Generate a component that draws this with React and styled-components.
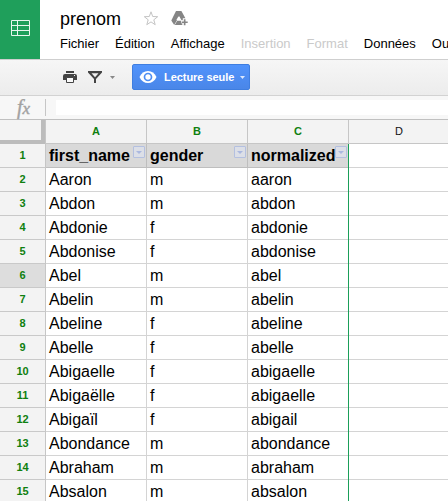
import React from "react";
import styled, { createGlobalStyle } from "styled-components";

const Global = createGlobalStyle`
  * { box-sizing: border-box; }
  body { margin: 0; background: #fff; overflow: hidden; font-family: "Liberation Sans", Arial, sans-serif; }
  svg { display: block; }
`;

const Page = styled.div`
  width: 100vw;
  height: 100vh;
  overflow: hidden;
  display: flex;
  flex-direction: column;
`;

const Header = styled.header`
  display: flex;
  flex: none;
  height: 60px;
  border-bottom: 1px solid #cfcfcf;
`;

const Logo = styled.div`
  width: 40px;
  height: 59px;
  flex: none;
  background: #1f9f5b;
  padding: 20px 0 0 11px;
`;

const HeaderBody = styled.div`
  flex: 1;
  min-width: 0;
  padding-left: 20px;
`;

const TitleRow = styled.div`
  display: flex;
  height: 34px;
  padding-top: 9px;
`;

const Title = styled.div`
  width: 83px;
  font-size: 18px;
  line-height: 20px;
`;

const TitleIcon = styled.div`
  width: 28px;
  padding-top: 1px;
`;

const Menu = styled.nav`
  display: flex;
  gap: 16px;
  height: 20px;
  font-size: 13px;
  line-height: 20px;
  white-space: nowrap;
`;

const MenuItem = styled.span`
  flex: none;
  color: ${(p) => (p.$disabled ? "#cacaca" : "#000")};
`;

const Toolbar = styled.div`
  display: flex;
  flex: none;
  height: 36px;
  padding: 4px 0 0 62px;
  background: linear-gradient(#f6f6f6, #ececec);
  border-bottom: 1px solid #d2d2d2;
`;

const Tool = styled.div`
  width: ${(p) => p.$w}px;
  height: 26px;
  flex: none;
`;

const ModeButton = styled.button`
  display: flex;
  align-items: center;
  width: 118px;
  height: 26px;
  padding: 0 0 0 6px;
  border: 1px solid #3f7ee0;
  border-radius: 2px;
  background: linear-gradient(#5093fc, #4a86e8);
  color: #fff;
  font: bold 11px/24px "Liberation Sans", Arial, sans-serif;
  white-space: nowrap;
`;

const ModeLabel = styled.span`
  width: 76px;
  margin-left: 7px;
  letter-spacing: -0.05px;
  text-align: left;
`;

const FormulaBar = styled.div`
  display: flex;
  flex: none;
  height: 24px;
  background: #f7f7f7;
  border-bottom: 1px solid #c0c0c0;
`;

const Fx = styled.div`
  width: 46px;
  height: 17px;
  margin-top: 3px;
  padding-left: 17px;
  border-right: 1px solid #c6c6c6;
  color: #a2a2a2;
  font: italic 20px/16px "Liberation Serif", serif;
  -webkit-text-stroke: 0.4px #a2a2a2;
`;

const FxSub = styled.span`
  font-size: 17px;
`;

const FormulaInput = styled.div`
  flex: 1;
  height: 15px;
  margin: 4px 0 0 10px;
  background: #fff;
`;

const Grid = styled.div`
  display: grid;
  flex: none;
  width: 450px;
  grid-template-columns: 46px 101px 101px 101px 101px;
  grid-auto-rows: 24px;
`;

const Corner = styled.div`
  background: #f3f3f3;
  box-shadow: inset -1px 0 #c6c6c6, inset -5px -4px #bcbcbc;
`;

const ColumnHead = styled.div`
  background: #f3f3f3;
  border-right: 1px solid #c6c6c6;
  border-bottom: 1px solid #c6c6c6;
  text-align: center;
  font-size: 11px;
  font-weight: ${(p) => (p.$filtered ? "bold" : "normal")};
  line-height: 23px;
  color: ${(p) => (p.$filtered ? "#0f800f" : "#111")};
`;

const RowHead = styled.div`
  background: ${(p) => (p.$active ? "#dddddd" : "#f3f3f3")};
  border-right: 1px solid #c6c6c6;
  border-bottom: 1px solid #c9c9c9;
  text-align: center;
  font-size: 11px;
  font-weight: bold;
  line-height: 23px;
  color: #0f800f;
`;

const Cell = styled.div`
  position: relative;
  min-width: 0;
  padding-left: 3px;
  box-shadow:
    inset -1px 0 ${(p) => (p.$edge ? "#1a9f59" : p.$head ? "#bebebe" : "#d4d4d4")},
    inset 0 -1px ${(p) => (p.$head ? "#bebebe" : "#d4d4d4")};
  background: ${(p) => (p.$head ? "#d9d9d9" : "#fff")};
  font-size: 16px;
  font-weight: ${(p) => (p.$head ? "bold" : "normal")};
  line-height: 24px;
  white-space: nowrap;
`;

const FilterButton = styled.span`
  position: absolute;
  top: 2px;
  right: 2px;
  width: 12px;
  height: 12px;
  border: 1px solid #b4c0e0;
  border-radius: 1px;
  background: #dcdfe7;
  display: flex;
  align-items: center;
  justify-content: center;
`;

const Caret = ({ w = 6, h = 3, color }) => (
  <svg width={w} height={h} viewBox="0 0 6 3" preserveAspectRatio="none">
    <path d="M0 0h6L3 3z" fill={color} />
  </svg>
);

const MENU = [
  ["Fichier"], ["Édition"], ["Affichage"], ["Insertion", true],
  ["Format", true], ["Données"], ["Outils"],
];

const ROWS = [
  ["first_name", "gender", "normalized"],
  ["Aaron", "m", "aaron"],
  ["Abdon", "m", "abdon"],
  ["Abdonie", "f", "abdonie"],
  ["Abdonise", "f", "abdonise"],
  ["Abel", "m", "abel"],
  ["Abelin", "m", "abelin"],
  ["Abeline", "f", "abeline"],
  ["Abelle", "f", "abelle"],
  ["Abigaelle", "f", "abigaelle"],
  ["Abigaëlle", "f", "abigaelle"],
  ["Abigaïl", "f", "abigail"],
  ["Abondance", "m", "abondance"],
  ["Abraham", "m", "abraham"],
  ["Absalon", "m", "absalon"],
];

export default function App() {
  return (
    <Page>
      <Global />
      <Header>
        <Logo>
          <svg width="19" height="16" fill="none" stroke="#e9f6ef" strokeWidth="1">
            <path d="M.5 .5h18v15H.5zM.5 5.5h18M.5 10.5h18M6.5 .5v15" />
          </svg>
        </Logo>
        <HeaderBody>
          <TitleRow>
            <Title>prenom</Title>
            <TitleIcon>
              <svg width="16" height="16" viewBox="0 0 16 16" fill="none" stroke="#c4c4c4">
                <path d="M8 1.800l1.700 4.700 5 .2-3.900 3.100 1.400 4.900L8 11.900l-4.200 2.800 1.400-4.900-3.900-3.100 5-.2z" />
              </svg>
            </TitleIcon>
            <TitleIcon>
              <svg width="17" height="16" viewBox="0 0 17 16" fill="#858585">
                <path d="M5 1h2.300l2 3.600L3.200 15 .3 10.600z" />
                <path d="M6.600 1h3.800l4 7.300h-2.600v1.900h-1.300L6.400 3z" />
                <path d="M6.200 10.800h3.800v2.400h1.300V15H3.800z" />
                <path d="M12.800 9.200h1.700v2.200h2.200v1.600h-2.200v2.200h-1.700V13h-2.200v-1.600h2.200z" />
                <path d="M7.500 6.300l2.200 3.700H5.400z" fill="#fff" />
              </svg>
            </TitleIcon>
          </TitleRow>
          <Menu>
            {MENU.map(([label, disabled]) => (
              <MenuItem key={label} $disabled={disabled}>{label}</MenuItem>
            ))}
          </Menu>
        </HeaderBody>
      </Header>
      <Toolbar>
        <Tool $w={26}>
          <svg width="16" height="26" viewBox="0 0 16 26">
            <path d="M4 7h8v2H4zM3 10h10q2 0 2 2v4h-3v-2H4v2H1v-4q0-2 2-2z" fill="#444" />
            <path d="M4.500 13.500h7v5h-7z" fill="#fafafa" stroke="#444" />
            <path d="M12 11h1v1h-1z" fill="#eee" />
          </svg>
        </Tool>
        <Tool $w={44}>
          <svg width="30" height="26" viewBox="0 0 30 26">
            <path d="M0 7h14v1.500L8 15v4H6v-4L0 8.500z" fill="#444" />
            <path d="M3.500 9.300h7L7 13.300z" fill="#f1f1f1" />
            <path d="M22 12h5l-2.500 3z" fill="#888" />
          </svg>
        </Tool>
        <ModeButton>
          <svg width="18" height="14" viewBox="0 0 18 14">
            <path d="M.5 7C2.300 3 5.300 1 9 1s6.700 2 8.500 6c-1.800 4-4.800 6-8.500 6S2.300 11 .5 7z" fill="#fff" />
            <circle cx="9" cy="7" r="3.500" fill="#fff" stroke="#4d8df3" strokeWidth="1.700" />
          </svg>
          <ModeLabel>Lecture seule</ModeLabel>
          <Caret w={5} h={3} color="#dce8fd" />
        </ModeButton>
      </Toolbar>
      <FormulaBar>
        <Fx>f<FxSub>x</FxSub></Fx>
        <FormulaInput />
      </FormulaBar>
      <Grid>
        <Corner />
        {["A", "B", "C", "D"].map((c) => (
          <ColumnHead key={c} $filtered={c !== "D"}>{c}</ColumnHead>
        ))}
        {ROWS.map((row, r) => (
          <React.Fragment key={r}>
            <RowHead $active={r === 5}>{r + 1}</RowHead>
            {row.map((text, c) => (
              <Cell key={c} $head={r === 0} $edge={c === 2}>
                {text}
                {r === 0 && <FilterButton><Caret color="#aab8e0" /></FilterButton>}
              </Cell>
            ))}
            <Cell />
          </React.Fragment>
        ))}
      </Grid>
    </Page>
  );
}
